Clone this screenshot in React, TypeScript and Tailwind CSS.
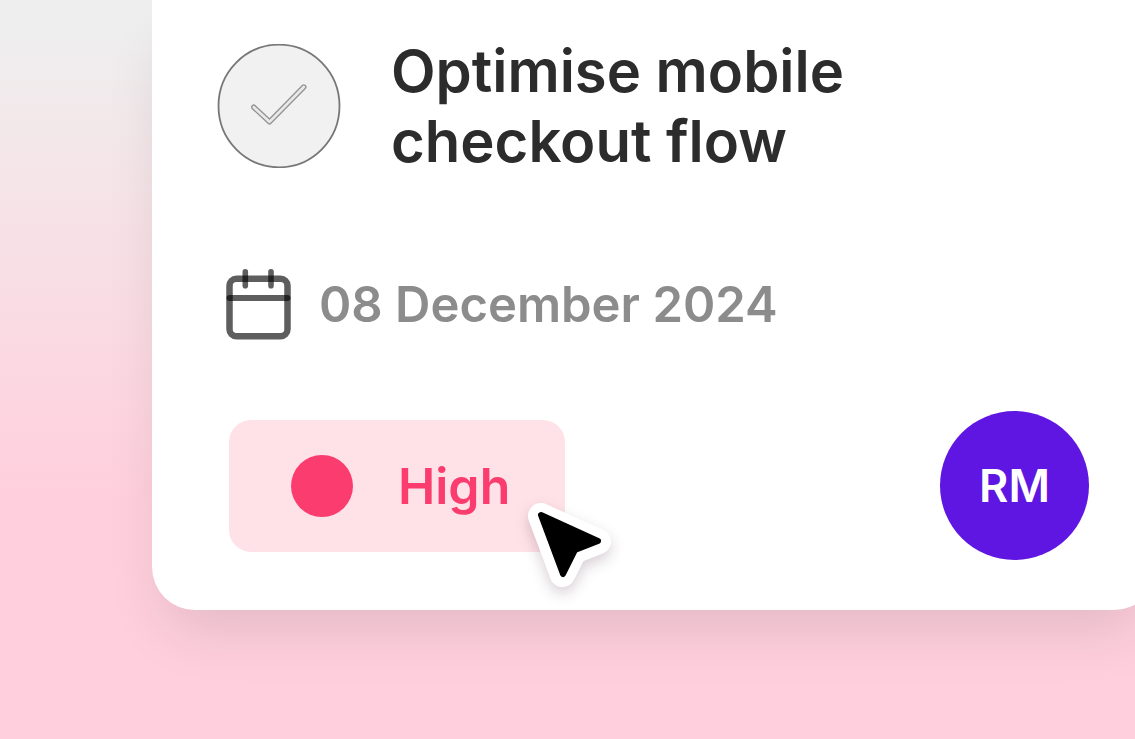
function CheckIcon() {
  return (
    <svg viewBox="0 0 124 124" className="h-full w-full" fill="none" aria-hidden="true">
      <ellipse cx="62" cy="62" rx="60.5" ry="61.3" fill="#f1f1f1" stroke="#777777" strokeWidth="1.8" />
      <path d="M36.8 63.2 52.5 77.8 86.8 43" stroke="#959595" strokeWidth="5.4" strokeLinecap="round" strokeLinejoin="round" />
      <path d="M36.8 63.2 52.5 77.8 86.8 43" stroke="#e9e9e9" strokeWidth="2.6" strokeLinecap="round" strokeLinejoin="round" />
    </svg>
  )
}

function CalendarIcon() {
  return (
    <svg viewBox="0 0 66 72" className="h-[72px] w-[66px] shrink-0" fill="none" aria-hidden="true">
      <g stroke="#000000" strokeOpacity="0.63">
        <rect x="3.5" y="9.8" width="58" height="57.5" rx="7" strokeWidth="6.5" />
        <path d="M3.5 29h58" strokeWidth="6" strokeLinecap="round" />
        <path d="M19.3 2.8v14" strokeWidth="5.6" strokeLinecap="round" />
        <path d="M45 2.8v14" strokeWidth="5.6" strokeLinecap="round" />
      </g>
    </svg>
  )
}

function CursorIcon() {
  return (
    <svg
      viewBox="0 0 84 86"
      className="pointer-events-none absolute -right-[46px] -bottom-[35px] h-[86px] w-[84px] overflow-visible drop-shadow-[0_6px_7px_rgba(60,20,50,0.2)]"
      aria-hidden="true"
    >
      <path d="M14 15 71 40.5 47 50 35.5 73Z" fill="#ffffff" stroke="#ffffff" strokeWidth="26" strokeLinejoin="round" />
      <path d="M14 14 71 40 48 49 36 73Z" fill="#000000" stroke="#000000" strokeWidth="6" strokeLinejoin="round" />
    </svg>
  )
}

export default function App() {
  return (
    <main className="min-h-screen overflow-hidden bg-[#ffcfdd] bg-linear-to-b from-[#efeeee] from-5% via-[#ffcfdd] via-67% to-[#ffcfdd] font-['Inter',sans-serif] font-semibold">
      <article className="ml-[152px] -mr-[22px] rounded-b-[43px] bg-white pt-9 pr-[68px] pb-[50px] pl-[65px] shadow-[0_32px_60px_-12px_rgba(0,0,0,0.11)]">
        <header className="flex items-center gap-[50px]">
          <button type="button" aria-label="Mark task complete" className="size-[124px] shrink-0 rounded-full">
            <CheckIcon />
          </button>
          <h1 className="text-[58px] leading-[70px] text-[#2c2c2c]">
            Optimise mobile
            <br />
            checkout flow
          </h1>
        </header>

        <div className="mt-[93px] flex items-center gap-[27px] pl-[9px]">
          <CalendarIcon />
          <time dateTime="2024-12-08" className="text-[49px] leading-[60px] text-[#8c8c8c]">
            08 December 2024
          </time>
        </div>

        <footer className="mt-[70px] flex items-center justify-between pl-[12px]">
          <div className="relative flex h-[132px] w-[336px] items-center gap-[45px] rounded-[22px] bg-[#ffe2e8] pl-[62px]">
            <span className="size-[62px] rounded-full bg-[#fa3c6f]" />
            <span className="text-[50px] leading-[60px] text-[#fa3c6f]">High</span>
            <CursorIcon />
          </div>
          <span className="flex size-[149px] items-center justify-center rounded-full bg-[#6016e2] text-[45px] leading-[60px] text-white">
            RM
          </span>
        </footer>
      </article>
    </main>
  )
}
